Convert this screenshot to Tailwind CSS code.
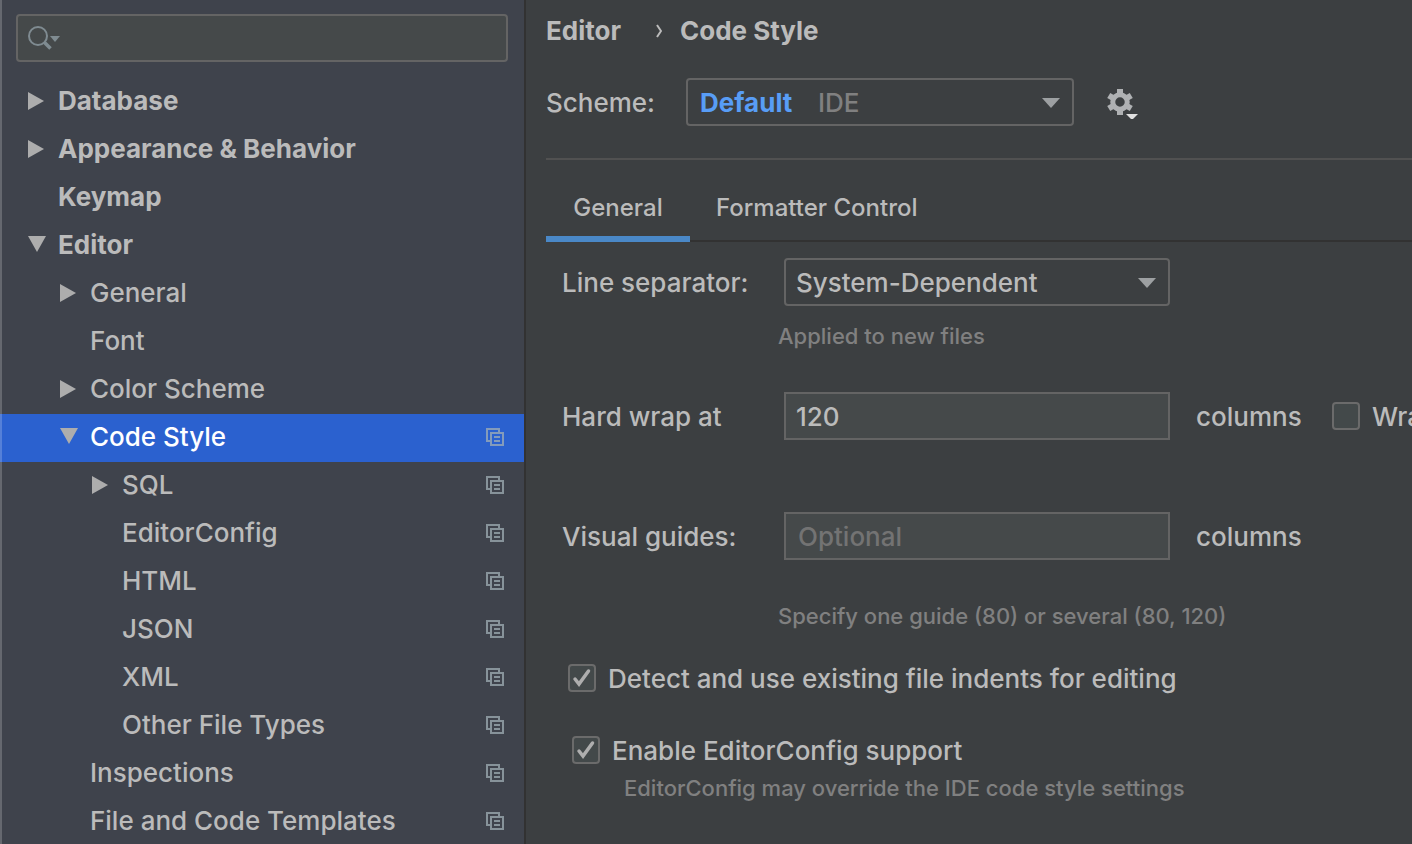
<!DOCTYPE html>
<html lang="en">
<head>
<meta charset="utf-8">
<meta name="viewport" content="width=device-width, initial-scale=1">
<title>Settings – Code Style</title>
<script src="https://cdn.jsdelivr.net/npm/@tailwindcss/browser@4"></script>
</head>
<body class="flex h-screen overflow-hidden bg-[#3c3f41] font-[Inter,'Liberation_Sans',sans-serif] text-[26px] leading-8 font-medium text-[#bbbbbb]">
<svg class="hidden" aria-hidden="true">
  <symbol id="right" viewBox="0 0 18 18"><path d="M0 0v18l16-9z" fill="#adadad"/></symbol>
  <symbol id="down" viewBox="0 0 18 18"><path d="M0 0h18L9 16z" fill="#adadad"/></symbol>
  <symbol id="copy" viewBox="0 0 18 18"><path d="M13 4V1H1v12h3M5 5h12v12H5zM8 9h6M8 13h6" fill="none" stroke="currentColor" stroke-width="2"/></symbol>
  <symbol id="drop" viewBox="0 0 18 10"><path d="M0 0h18L9 10z" fill="#9da0a2"/></symbol>
</svg>

<aside class="relative w-[526px] shrink-0 overflow-hidden border-r-2 border-[#323232] bg-[#3f434c]">
  <div class="px-4 pt-3.5 pb-4">
    <div class="flex h-12 items-center rounded border-2 border-[#646464] bg-[#45494a] pl-2.5">
      <svg class="h-6 w-8 shrink-0" viewBox="0 0 32 24" aria-hidden="true"><circle cx="10" cy="10" r="9" fill="none" stroke="#7f8b91" stroke-width="2"/><path d="M16.500 16.500l6 6" stroke="#7f8b91" stroke-width="3.500"/><path d="M22 10h10l-5 6z" fill="#7f8b91"/></svg>
      <input type="search" aria-label="Search settings" class="min-w-0 flex-1 bg-transparent px-2 outline-none">
    </div>
  </div>
  <nav aria-label="Settings">
    <ul>
      <li><button class="flex h-12 w-full items-center pr-5 pb-0.5 pl-7 text-left font-bold"><span class="w-[30px]"><svg class="size-[18px]"><use href="#right"/></svg></span>Database</button></li>
      <li><button class="flex h-12 w-full items-center pr-5 pb-0.5 pl-7 text-left font-bold"><span class="w-[30px]"><svg class="size-[18px]"><use href="#right"/></svg></span>Appearance &amp; Behavior</button></li>
      <li><button class="flex h-12 w-full items-center pr-5 pb-0.5 pl-7 text-left font-bold"><span class="w-[30px]"></span>Keymap</button></li>
      <li><button class="flex h-12 w-full items-center pr-5 pb-0.5 pl-7 text-left font-bold" aria-expanded="true"><span class="w-[30px]"><svg class="size-[18px]"><use href="#down"/></svg></span>Editor</button></li>
      <li><button class="flex h-12 w-full items-center pr-5 pb-0.5 pl-15 text-left"><span class="w-[30px]"><svg class="size-[18px]"><use href="#right"/></svg></span>General</button></li>
      <li><button class="flex h-12 w-full items-center pr-5 pb-0.5 pl-15 text-left"><span class="w-[30px]"></span>Font</button></li>
      <li><button class="flex h-12 w-full items-center pr-5 pb-0.5 pl-15 text-left"><span class="w-[30px]"><svg class="size-[18px]"><use href="#right"/></svg></span>Color Scheme</button></li>
      <li><button class="flex h-12 w-full items-center bg-[#2b61cf] pr-5 pb-0.5 pl-15 text-left text-white" aria-current="page" aria-expanded="true"><span class="w-[30px]"><svg class="size-[18px]"><use href="#down"/></svg></span>Code Style<svg class="ml-auto size-[18px] text-[#849bbb]"><use href="#copy"/></svg></button></li>
      <li><button class="flex h-12 w-full items-center pr-5 pb-0.5 pl-23 text-left"><span class="w-[30px]"><svg class="size-[18px]"><use href="#right"/></svg></span>SQL<svg class="ml-auto size-[18px] text-[#87939a]"><use href="#copy"/></svg></button></li>
      <li><button class="flex h-12 w-full items-center pr-5 pb-0.5 pl-23 text-left"><span class="w-[30px]"></span>EditorConfig<svg class="ml-auto size-[18px] text-[#87939a]"><use href="#copy"/></svg></button></li>
      <li><button class="flex h-12 w-full items-center pr-5 pb-0.5 pl-23 text-left"><span class="w-[30px]"></span>HTML<svg class="ml-auto size-[18px] text-[#87939a]"><use href="#copy"/></svg></button></li>
      <li><button class="flex h-12 w-full items-center pr-5 pb-0.5 pl-23 text-left"><span class="w-[30px]"></span>JSON<svg class="ml-auto size-[18px] text-[#87939a]"><use href="#copy"/></svg></button></li>
      <li><button class="flex h-12 w-full items-center pr-5 pb-0.5 pl-23 text-left"><span class="w-[30px]"></span>XML<svg class="ml-auto size-[18px] text-[#87939a]"><use href="#copy"/></svg></button></li>
      <li><button class="flex h-12 w-full items-center pr-5 pb-0.5 pl-23 text-left"><span class="w-[30px]"></span>Other File Types<svg class="ml-auto size-[18px] text-[#87939a]"><use href="#copy"/></svg></button></li>
      <li><button class="flex h-12 w-full items-center pr-5 pb-0.5 pl-15 text-left"><span class="w-[30px]"></span>Inspections<svg class="ml-auto size-[18px] text-[#87939a]"><use href="#copy"/></svg></button></li>
      <li><button class="flex h-12 w-full items-center pr-5 pb-0.5 pl-15 text-left"><span class="w-[30px]"></span>File and Code Templates<svg class="ml-auto size-[18px] text-[#87939a]"><use href="#copy"/></svg></button></li>
    </ul>
  </nav>
  <div class="pointer-events-none absolute inset-y-0 left-0 w-0.5 bg-white/20"></div>
</aside>

<main class="min-w-0 flex-1 overflow-hidden pl-5 whitespace-nowrap">
  <h1 class="flex items-center pt-[15px] font-bold">
    <span class="min-w-[110px]">Editor</span>
    <svg class="mr-4.5 h-3.5 w-1.5" viewBox="0 0 6 14" aria-hidden="true"><path d="M1 1l4 6-4 6" fill="none" stroke="#bbbbbb" stroke-width="2"/></svg>
    <span>Code Style</span>
  </h1>
  <div class="flex items-center pt-[31px]">
    <label for="scheme" class="w-35 pt-0.5">Scheme:</label>
    <div class="relative w-[388px]">
      <select id="scheme" class="block h-12 w-full appearance-none rounded border-2 border-[#646464] bg-transparent px-3 pt-0.5 font-bold text-[#589df6] outline-none"><option>Default</option></select>
      <span class="pointer-events-none absolute top-[9px] left-33 text-[#808080]">IDE</span>
      <svg class="pointer-events-none absolute top-5 right-3.5 h-2.5 w-[18px]"><use href="#drop"/></svg>
    </div>
    <button aria-label="Scheme actions" class="ml-8 pt-0.5">
      <svg class="h-8 w-8" viewBox="0 0 32 32">
        <g transform="translate(14 15)" fill="#afb1b3">
          <circle r="7.250" fill="none" stroke="#afb1b3" stroke-width="5"/>
          <path id="tooth" d="M-3-13h6v5h-6z"/>
          <use href="#tooth" transform="rotate(60)"/><use href="#tooth" transform="rotate(120)"/><use href="#tooth" transform="rotate(180)"/><use href="#tooth" transform="rotate(240)"/><use href="#tooth" transform="rotate(300)"/>
        </g>
        <path d="M20 27h12l-6 6z" fill="#e0e0e0"/>
      </svg>
    </button>
  </div>
  <hr class="mt-8 border-t-2 border-[#515151]">

  <div role="tablist" class="flex h-[82px] items-stretch text-2xl shadow-[inset_0_-2px_0_#323232]">
    <button role="tab" aria-selected="true" class="w-36 border-b-6 border-[#4a88c7] pt-5">General</button>
    <button role="tab" aria-selected="false" class="border-b-6 border-transparent px-6.5 pt-5">Formatter Control</button>
  </div>

  <form class="pt-4 pl-4">
    <div class="flex items-center">
      <label for="sep" class="w-[222px] shrink-0 pt-0.5">Line separator:</label>
      <div class="relative w-[386px] shrink-0">
        <select id="sep" class="block h-12 w-full appearance-none rounded border-2 border-[#646464] bg-transparent px-2.5 pt-0.5 outline-none"><option>System-Dependent</option></select>
        <svg class="pointer-events-none absolute top-5 right-3.5 h-2.5 w-[18px]"><use href="#drop"/></svg>
      </div>
    </div>
    <p class="pt-3.5 pl-54 text-[22px] text-[#808080]">Applied to new files</p>
    <div class="flex items-center pt-10">
      <label for="wrap" class="w-[222px] shrink-0 pt-0.5">Hard wrap at</label>
      <input id="wrap" type="text" value="120" class="h-12 w-[386px] shrink-0 border-2 border-[#646464] bg-[#45494a] px-2.5 outline-none">
      <span class="w-[162px] shrink-0 pt-0.5 pl-6.5">columns</span>
      <label class="flex items-center gap-3"><input type="checkbox" class="size-7 appearance-none rounded border-2 border-[#6b6b6b] bg-[#43494a]"><span class="pt-0.5">Wrap on typing</span></label>
    </div>
    <div class="flex items-center pt-18">
      <label for="guides" class="w-[222px] shrink-0 pt-0.5">Visual guides:</label>
      <input id="guides" type="text" placeholder="Optional" class="h-12 w-[386px] shrink-0 border-2 border-[#646464] bg-[#45494a] px-3 outline-none placeholder:text-[#737373]">
      <span class="pt-0.5 pl-6.5">columns</span>
    </div>
    <p class="pt-10 pl-54 text-[22px] text-[#808080]">Specify one guide (80) or several (80, 120)</p>
    <label class="mt-[31px] ml-1.5 flex w-fit items-center gap-3 leading-7">
      <span class="relative size-7"><input type="checkbox" checked class="block size-7 appearance-none rounded border-2 border-[#6b6b6b] bg-[#43494a]"><svg class="pointer-events-none absolute inset-0 size-7" viewBox="0 0 28 28"><path d="M7 15l4 5L20.500 7" fill="none" stroke="#aeaeae" stroke-width="3.500" stroke-linecap="round"/></svg></span><span class="pt-0.5">Detect and use existing file indents for editing</span></label>
    <label class="mt-[42px] ml-2.5 flex w-fit items-center gap-3 leading-7">
      <span class="relative size-7"><input type="checkbox" checked class="block size-7 appearance-none rounded border-2 border-[#6b6b6b] bg-[#43494a]"><svg class="pointer-events-none absolute inset-0 size-7" viewBox="0 0 28 28"><path d="M7 15l4 5L20.500 7" fill="none" stroke="#aeaeae" stroke-width="3.500" stroke-linecap="round"/></svg></span><span class="pt-0.5">Enable EditorConfig support</span></label>
    <p class="pt-[7px] pl-15.5 text-[22px] text-[#808080]">EditorConfig may override the IDE code style settings</p>
  </form>
</main>
</body>
</html>
